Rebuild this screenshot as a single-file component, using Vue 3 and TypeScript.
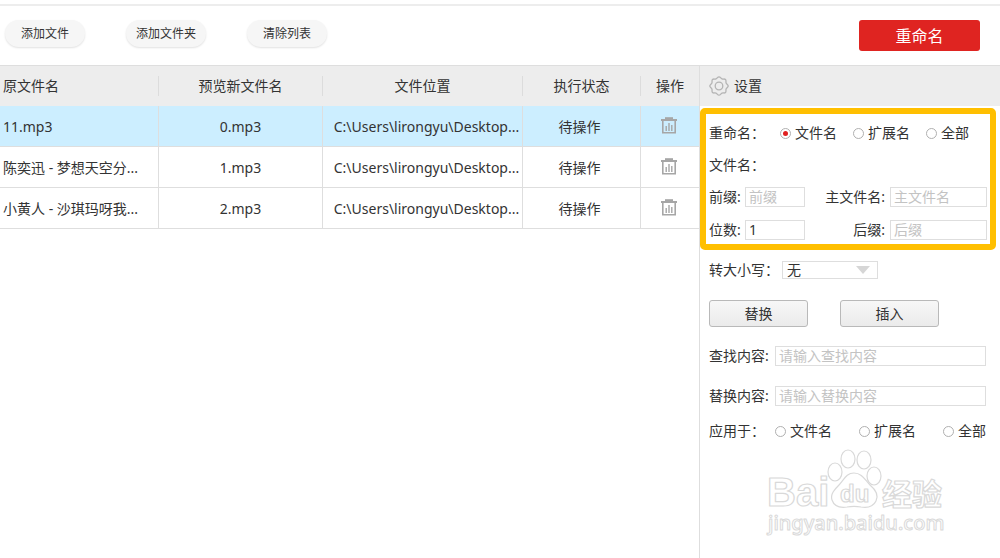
<script setup lang="ts">
import { ref } from 'vue'

interface FileRow {
  name: string
  preview: string
  location: string
  status: string
}

const files: FileRow[] = [
  { name: '11.mp3', preview: '0.mp3', location: 'C:\\Users\\lirongyu\\Desktop...', status: '待操作' },
  { name: '陈奕迅 - 梦想天空分...', preview: '1.mp3', location: 'C:\\Users\\lirongyu\\Desktop...', status: '待操作' },
  { name: '小黄人 - 沙琪玛呀我...', preview: '2.mp3', location: 'C:\\Users\\lirongyu\\Desktop...', status: '待操作' },
]

const actions: string[] = ['添加文件', '添加文件夹', '清除列表']
const scopes: string[] = ['文件名', '扩展名', '全部']

const selected = ref<number>(0)
const renameScope = ref<string>('文件名')
const applyScope = ref<string>('')
const prefix = ref<string>('')
const mainName = ref<string>('')
const digits = ref<string>('1')
const suffix = ref<string>('')
const letterCase = ref<string>('无')
const findText = ref<string>('')
const replaceText = ref<string>('')
</script>

<template>
  <div class="app">
    <header class="toolbar">
      <div class="actions">
        <button v-for="a in actions" :key="a" type="button" class="pill">{{ a }}</button>
      </div>
      <button type="button" class="rename">重命名</button>
    </header>

    <main class="body">
      <section class="list">
        <table class="files">
          <colgroup>
            <col class="c-name" />
            <col class="c-preview" />
            <col class="c-location" />
            <col class="c-status" />
            <col class="c-op" />
          </colgroup>
          <thead>
            <tr>
              <th class="left"><span>原文件名</span></th>
              <th><span>预览新文件名</span></th>
              <th><span>文件位置</span></th>
              <th><span>执行状态</span></th>
              <th><span>操作</span></th>
            </tr>
          </thead>
          <tbody>
            <tr v-for="(f, i) in files" :key="f.name" :class="{ active: i === selected }" @click="selected = i">
              <td class="left">{{ f.name }}</td>
              <td>{{ f.preview }}</td>
              <td class="location">{{ f.location }}</td>
              <td class="status">{{ f.status }}</td>
              <td class="op">
                <button type="button" class="trash" aria-label="删除">
                  <svg viewBox="0 0 16 17" width="16" height="17" fill="none" stroke="#a6a6a6">
                    <path d="M4 1.2h8" stroke-width="2" />
                    <path d="M0 3h16" stroke-width="2" />
                    <path d="M1.8 4v11.8h12.4V4" stroke-width="1.6" />
                    <path d="M5.2 9v5M8 6v8M10.8 8v6" stroke-width="1.4" />
                  </svg>
                </button>
              </td>
            </tr>
          </tbody>
        </table>
      </section>

      <aside class="panel">
        <h2 class="panel-title">
          <svg viewBox="0 0 20 20" width="20" height="20" fill="none" stroke="#b4b4b4" stroke-width="1.3">
            <path
              d="M10 .8 C11.4 .8 11.8 2.4 13 2.9 C14.2 3.4 15.5 2.5 16.5 3.5 C17.5 4.5 16.6 5.8 17.1 7 C17.6 8.2 19.2 8.6 19.2 10 C19.2 11.4 17.6 11.8 17.1 13 C16.6 14.2 17.5 15.5 16.5 16.5 C15.5 17.5 14.2 16.6 13 17.1 C11.8 17.6 11.4 19.2 10 19.2 C8.6 19.2 8.2 17.6 7 17.1 C5.8 16.6 4.5 17.5 3.5 16.5 C2.5 15.5 3.4 14.2 2.9 13 C2.4 11.8 .8 11.4 .8 10 C.8 8.6 2.4 8.2 2.9 7 C3.4 5.8 2.5 4.5 3.5 3.5 C4.5 2.5 5.8 3.4 7 2.9 C8.2 2.4 8.6 .8 10 .8Z"
            />
            <circle cx="10" cy="10" r="3.8" />
          </svg>
          设置
        </h2>

        <div class="highlight">
          <div class="line" role="radiogroup" aria-label="重命名">
            <span class="radio-label">重命名：</span>
            <div class="radios">
              <label v-for="s in scopes" :key="s" class="radio">
                <input v-model="renameScope" type="radio" name="rename-scope" :value="s" />{{ s }}
              </label>
            </div>
          </div>
          <div class="line">文件名：</div>
          <div class="fields">
            <label for="prefix">前缀:</label>
            <input id="prefix" v-model="prefix" class="box" type="text" placeholder="前缀" />
            <label for="main-name" class="right">主文件名:</label>
            <input id="main-name" v-model="mainName" class="box" type="text" placeholder="主文件名" />
            <label for="digits">位数:</label>
            <input id="digits" v-model="digits" class="box" type="text" />
            <label for="suffix" class="right">后缀:</label>
            <input id="suffix" v-model="suffix" class="box" type="text" placeholder="后缀" />
          </div>
        </div>

        <div class="settings">
          <div class="line case">
            <label for="letter-case">转大小写：</label>
            <div class="select">
              <select id="letter-case" v-model="letterCase">
                <option>无</option>
                <option>大写</option>
                <option>小写</option>
              </select>
              <svg class="arrow" viewBox="0 0 14 8" width="14" height="8"><path d="M0 0h14L7 8z" fill="#d6d6d6" /></svg>
            </div>
          </div>
          <div class="buttons">
            <button type="button" class="grey">替换</button>
            <button type="button" class="grey">插入</button>
          </div>
          <div class="pair">
            <label for="find">查找内容:</label>
            <input id="find" v-model="findText" class="box" type="text" placeholder="请输入查找内容" />
          </div>
          <div class="pair">
            <label for="replace">替换内容:</label>
            <input id="replace" v-model="replaceText" class="box" type="text" placeholder="请输入替换内容" />
          </div>
          <div class="line apply" role="radiogroup" aria-label="应用于">
            <span class="radio-label">应用于：</span>
            <div class="radios">
              <label v-for="s in scopes" :key="s" class="radio">
                <input v-model="applyScope" type="radio" name="apply-scope" :value="s" />{{ s }}
              </label>
            </div>
          </div>
        </div>

        <svg class="mark" viewBox="0 0 190 92" width="190" height="92" fill="#fff" stroke="#d9d9d9" stroke-width="1.2" stroke-linejoin="round">
          <text class="latin" x="7" y="57" font-size="40">Bai</text>
          <ellipse cx="75" cy="23" rx="7" ry="9" />
          <ellipse cx="88" cy="10" rx="7" ry="9" />
          <ellipse cx="104" cy="11" rx="7" ry="9" />
          <ellipse cx="114" cy="27" rx="7" ry="9" />
          <path d="M94 24 C102 24 105 31 110 36 C116 41 119 46 116 52 C113 58 107 59 101 58 C96 57 92 57 87 58 C80 59 74 57 72 51 C70 45 75 40 79 36 C84 31 86 24 94 24Z" />
          <text class="latin" x="80" y="53" font-size="24">du</text>
          <text class="han" x="122" y="56" font-size="30">经验</text>
          <text class="url" x="8" y="81" font-size="20">jingyan.baidu.com</text>
        </svg>
      </aside>
    </main>
  </div>
</template>

<style>
body {
  margin: 0;
  background: #fff;
}
</style>

<style scoped>
.app {
  box-sizing: border-box;
  min-height: 100vh;
  display: flex;
  flex-direction: column;
  padding-top: 4px;
  color: #333;
  font-family: "Noto Sans", "Noto Sans CJK SC", sans-serif;
  font-size: 14px;
  line-height: 20px;
}
button,
input,
select {
  box-sizing: border-box;
  margin: 0;
  padding: 0;
  font: inherit;
  color: inherit;
}
.toolbar {
  display: flex;
  align-items: flex-start;
  justify-content: space-between;
  box-sizing: border-box;
  height: 61px;
  padding: 14px 20px 0 5px;
  border-top: 2px solid #ededed;
}
.actions {
  display: flex;
  gap: 41px;
}
.pill {
  width: 80px;
  height: 27px;
  border: 0;
  border-radius: 14px;
  background: #f6f6f6;
  box-shadow: 0 1px 2px rgba(0, 0, 0, 0.12);
  font-size: 12px;
  white-space: nowrap;
}
.rename {
  width: 121px;
  height: 31px;
  border: 0;
  border-radius: 3px;
  background: #df2421;
  color: #fff;
  font-size: 16px;
}
.body {
  flex: 1;
  display: grid;
  grid-template-columns: minmax(0, 1fr) 301px;
}
.files {
  width: 100%;
  table-layout: fixed;
  border-collapse: separate;
  border-spacing: 0;
}
.c-preview {
  width: 164px;
}
.c-location {
  width: 200px;
}
.c-status {
  width: 118px;
}
.c-op {
  width: 58px;
}
th {
  box-sizing: border-box;
  height: 41px;
  padding: 0;
  border-top: 1px solid #dedede;
  background: #ededed;
  font-weight: 400;
}
th span {
  display: block;
  border-right: 1px solid #dcdcdc;
}
th:last-child span {
  border-right: 0;
}
td {
  box-sizing: border-box;
  height: 41px;
  padding: 2px 0 0;
  border-right: 1px solid #dedede;
  border-bottom: 1px solid #dedede;
  text-align: center;
  white-space: nowrap;
}
td:last-child {
  border-right: 0;
}
.active td {
  background: #cceeff;
}
.left {
  padding-left: 3px;
  text-align: left;
}
.location {
  padding-left: 8px;
}
.status {
  padding-right: 4px;
}
.op {
  padding: 0 2px 4px 0;
}
.trash {
  display: inline-flex;
  border: 0;
  background: none;
  vertical-align: middle;
}
.panel {
  display: flex;
  flex-direction: column;
  border-left: 1px solid #dedede;
}
.panel-title {
  display: flex;
  align-items: center;
  gap: 5px;
  box-sizing: border-box;
  height: 41px;
  margin: 0;
  padding-left: 9px;
  border-top: 1px solid #dedede;
  background: #ededed;
  font-size: 14px;
  font-weight: 400;
}
.highlight {
  margin: 2px 4px 0 0;
  padding: 3px 3px 4px;
  border: 6px solid #ffbf00;
  border-radius: 5px;
}
.line {
  display: flex;
  align-items: center;
  height: 24px;
}
.highlight .line {
  height: 32px;
}
.radio-label {
  width: 71px;
}
.radios {
  display: flex;
  gap: 16px;
}
.radio {
  display: flex;
  align-items: center;
  gap: 4px;
}
.radio input {
  appearance: none;
  display: grid;
  place-items: center;
  width: 11px;
  height: 11px;
  border: 1px solid #b0b0b0;
  border-radius: 50%;
  background: #fff;
}
.radio input:checked::before {
  content: "";
  width: 5px;
  height: 5px;
  border-radius: 50%;
  background: #e02020;
}
.fields {
  display: grid;
  grid-template-columns: 36px 60px minmax(0, 1fr) 97px;
  row-gap: 13px;
  align-items: center;
  margin-top: 6px;
}
.right {
  padding-right: 5px;
  text-align: right;
}
.box {
  width: 100%;
  min-width: 0;
  height: 20px;
  padding: 0 3px;
  border: 1px solid #dedede;
  border-radius: 0;
  background: #fff;
}
.box::placeholder {
  color: #c3c3c3;
  opacity: 1;
}
.settings {
  padding: 8px 14px 0 9px;
}
.case label {
  width: 73px;
}
.select {
  position: relative;
  width: 96px;
}
.select select {
  appearance: none;
  display: block;
  width: 100%;
  height: 18px;
  padding: 0 4px;
  border: 1px solid #dedede;
  border-radius: 0;
  background: #fff;
  line-height: 16px;
}
.arrow {
  position: absolute;
  top: 5px;
  right: 8px;
  pointer-events: none;
}
.buttons {
  display: flex;
  gap: 32px;
  margin: 18px 0 19px;
}
.grey {
  width: 99px;
  height: 27px;
  border: 1px solid #b9b9b9;
  border-radius: 3px;
  background: linear-gradient(#f7f7f7, #ebebeb);
}
.pair {
  display: grid;
  grid-template-columns: 66px minmax(0, 1fr);
  align-items: center;
  margin-bottom: 20px;
}
.apply {
  margin-top: -7px;
}
.apply .radio-label {
  width: 66px;
}
.apply .radios {
  flex: 1;
  justify-content: space-between;
}
.mark {
  margin: 6px 0 0 60px;
}
.latin {
  font-family: "Liberation Sans", sans-serif;
  font-weight: 700;
}
.han {
  font-family: "Noto Sans CJK SC", sans-serif;
  font-weight: 700;
}
.url {
  font-family: "Noto Sans", sans-serif;
  font-weight: 500;
  stroke-width: 1;
}
</style>
